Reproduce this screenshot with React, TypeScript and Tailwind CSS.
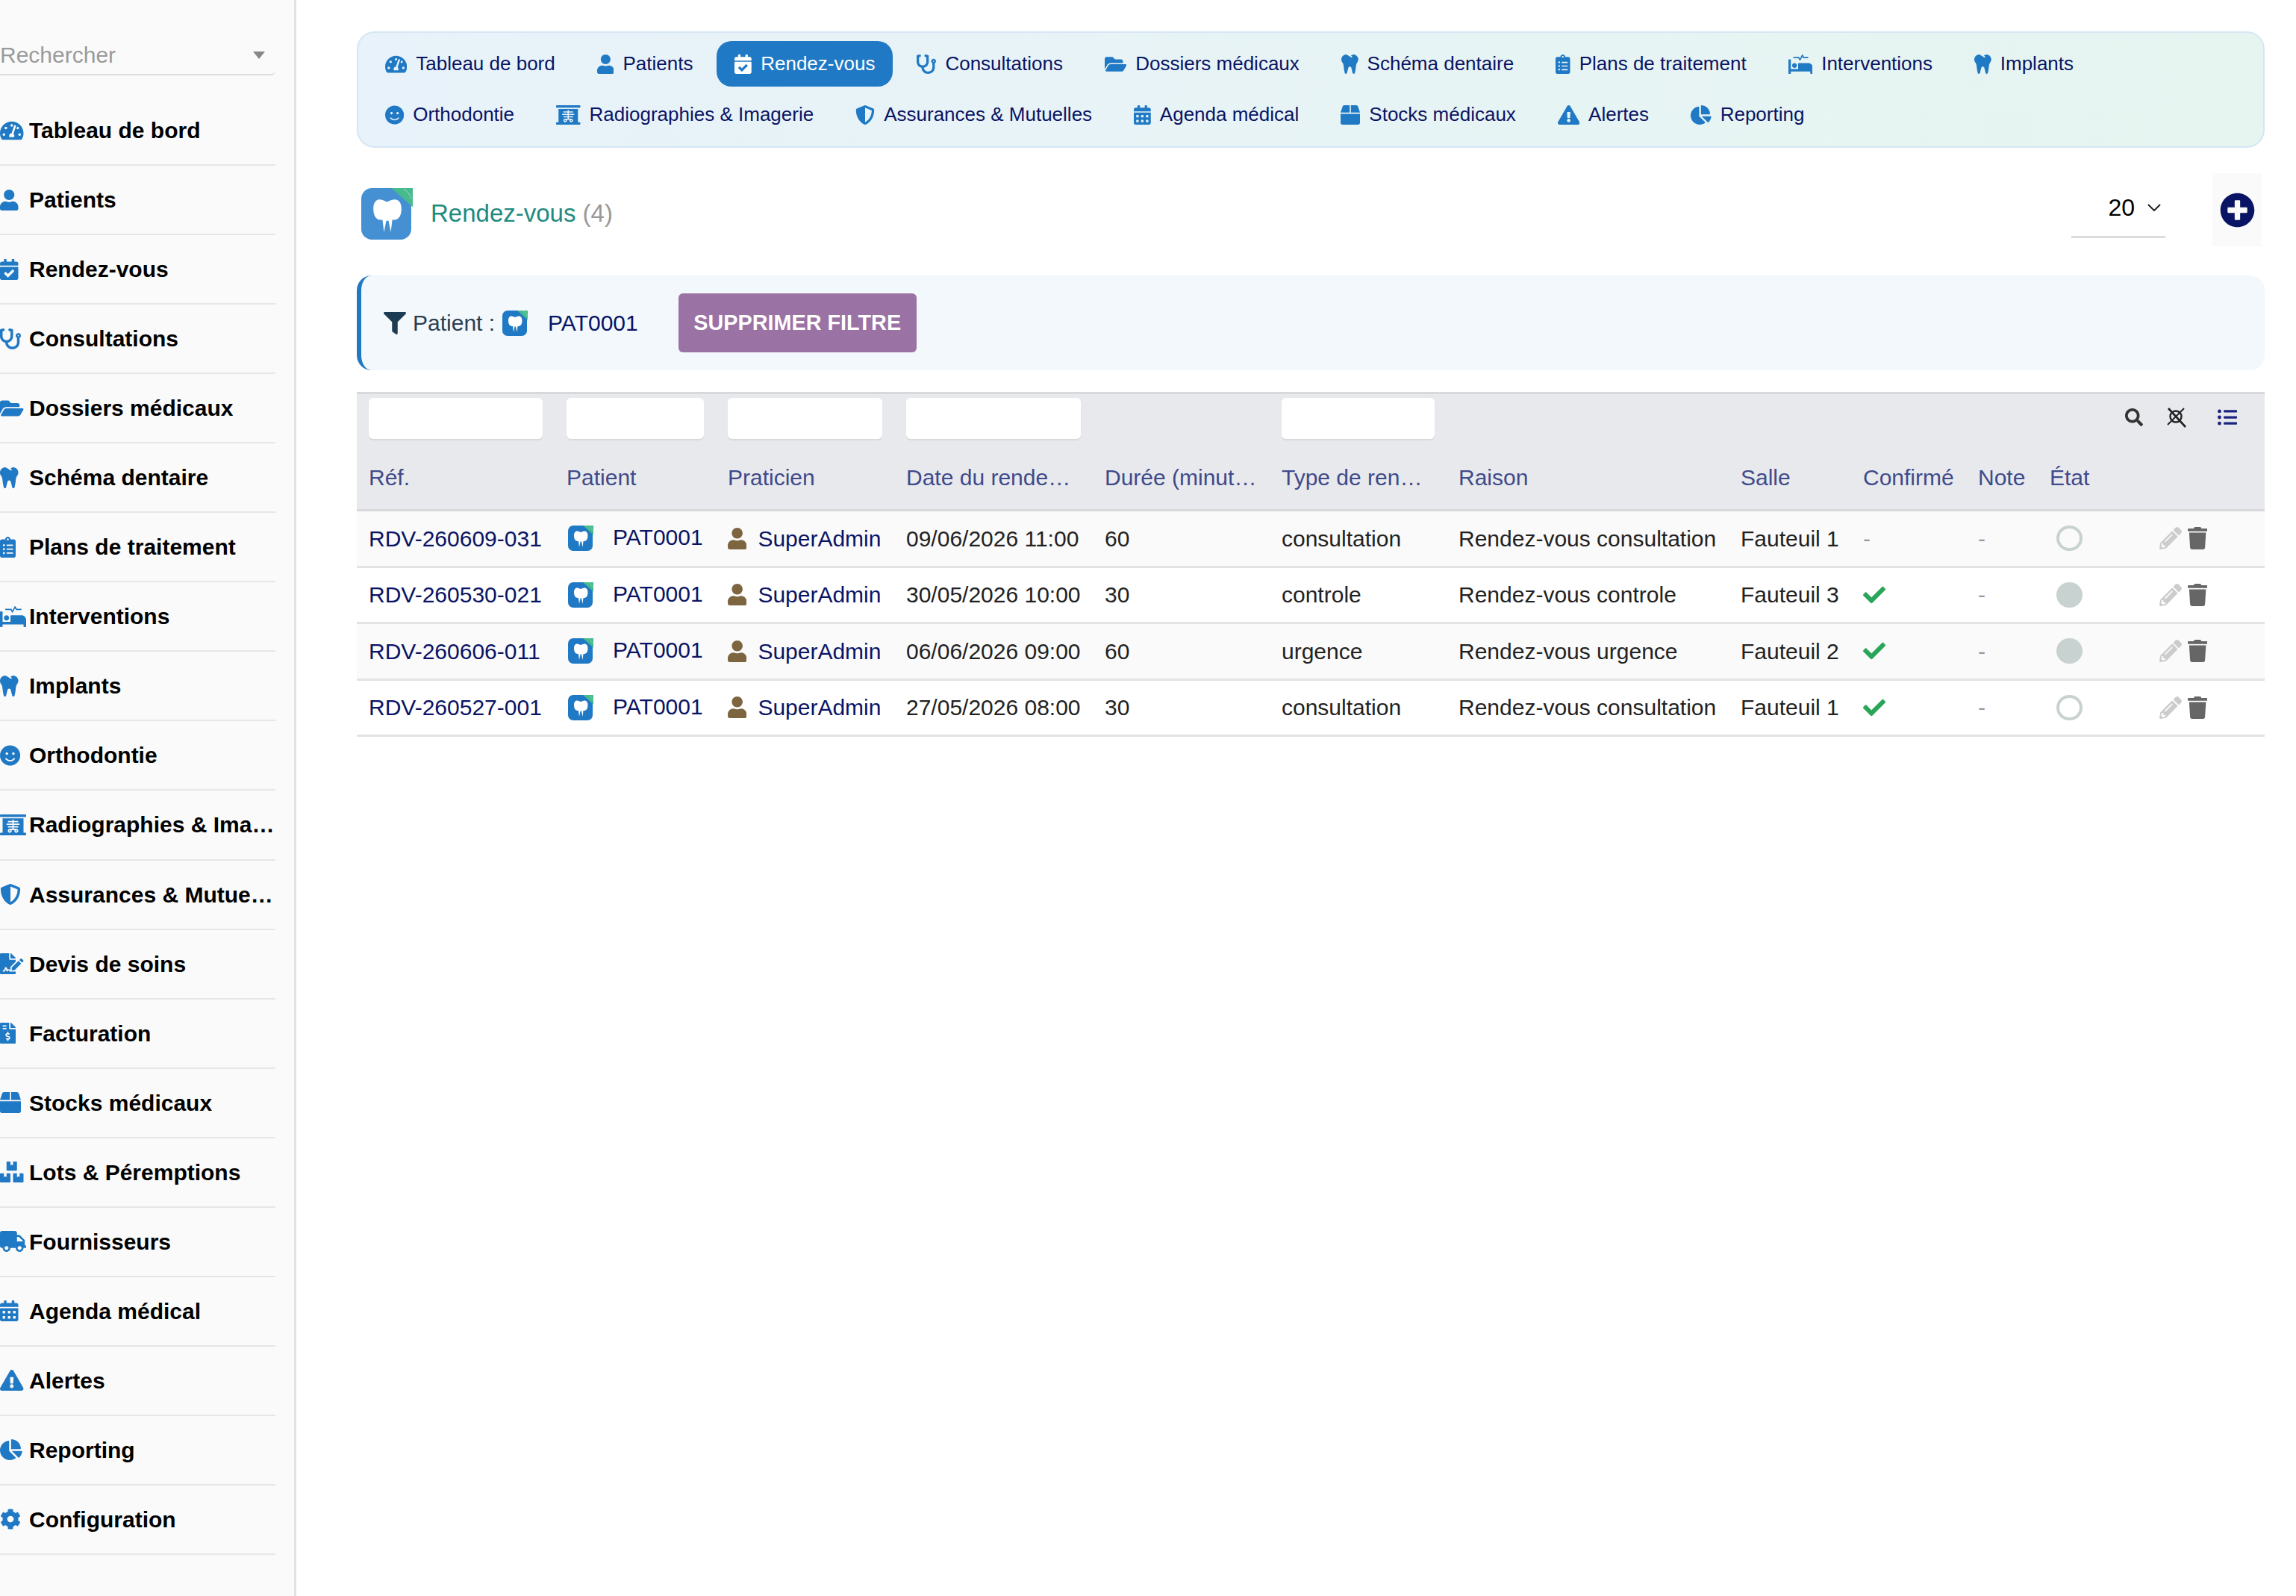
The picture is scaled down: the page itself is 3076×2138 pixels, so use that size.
import React from "react";
import {
  FaTachometerAlt, FaUser, FaCalendarCheck, FaStethoscope, FaFolderOpen, FaTooth, FaClipboardList,
  FaProcedures, FaSmile, FaXRay, FaShieldAlt, FaFileSignature, FaFileInvoiceDollar, FaBox, FaBoxes,
  FaTruck, FaCalendarAlt, FaExclamationTriangle, FaChartPie, FaCog, FaFilter, FaPlusCircle, FaSearch,
  FaListUl, FaCheck, FaPencilAlt, FaTrash,
} from "react-icons/fa";

type Ic = React.ComponentType<{ className?: string }>;
type Entry = [Ic, string, string];

const dash: Entry = [FaTachometerAlt, "Tableau de bord", "aspect-[576/512]"];
const pat: Entry = [FaUser, "Patients", "aspect-[448/512]"];
const rdv: Entry = [FaCalendarCheck, "Rendez-vous", "aspect-[448/512]"];
const cons: Entry = [FaStethoscope, "Consultations", "aspect-square"];
const doss: Entry = [FaFolderOpen, "Dossiers médicaux", "aspect-[576/512]"];
const schema: Entry = [FaTooth, "Schéma dentaire", "aspect-[448/512]"];
const plans: Entry = [FaClipboardList, "Plans de traitement", "aspect-[384/512]"];
const interv: Entry = [FaProcedures, "Interventions", "aspect-[640/512]"];
const impl: Entry = [FaTooth, "Implants", "aspect-[448/512]"];
const ortho: Entry = [FaSmile, "Orthodontie", "aspect-[496/512]"];
const radio: Entry = [FaXRay, "Radiographies & Imagerie", "aspect-[640/512]"];
const assur: Entry = [FaShieldAlt, "Assurances & Mutuelles", "aspect-square"];
const devis: Entry = [FaFileSignature, "Devis de soins", "aspect-[576/512]"];
const fact: Entry = [FaFileInvoiceDollar, "Facturation", "aspect-[384/512]"];
const stock: Entry = [FaBox, "Stocks médicaux", "aspect-square"];
const lots: Entry = [FaBoxes, "Lots & Péremptions", "aspect-[576/512]"];
const four: Entry = [FaTruck, "Fournisseurs", "aspect-[640/512]"];
const agenda: Entry = [FaCalendarAlt, "Agenda médical", "aspect-[448/512]"];
const alert: Entry = [FaExclamationTriangle, "Alertes", "aspect-[576/512]"];
const rep: Entry = [FaChartPie, "Reporting", "aspect-[544/512]"];
const conf: Entry = [FaCog, "Configuration", "aspect-square"];

const side: Entry[] = [dash, pat, rdv, cons, doss, schema, plans, interv, impl, ortho, radio, assur, devis, fact, stock, lots, four, agenda, alert, rep, conf];
const nav1: Entry[] = [dash, pat, rdv, cons, doss, schema, plans, interv, impl];
const nav2: Entry[] = [ortho, radio, assur, agenda, stock, alert, rep];

const rows = [
  { ref: "RDV-260609-031", date: "09/06/2026 11:00", dur: "60", type: "consultation", raison: "Rendez-vous consultation", salle: "Fauteuil 1", ok: false, full: false },
  { ref: "RDV-260530-021", date: "30/05/2026 10:00", dur: "30", type: "controle", raison: "Rendez-vous controle", salle: "Fauteuil 3", ok: true, full: true },
  { ref: "RDV-260606-011", date: "06/06/2026 09:00", dur: "60", type: "urgence", raison: "Rendez-vous urgence", salle: "Fauteuil 2", ok: true, full: true },
  { ref: "RDV-260527-001", date: "27/05/2026 08:00", dur: "30", type: "consultation", raison: "Rendez-vous consultation", salle: "Fauteuil 1", ok: true, full: false },
];

function Logo({ small }: { small?: boolean }) {
  return (
    <svg viewBox="0 0 68 68" className={small ? "w-[34px] h-[34px] shrink-0" : "w-[69px] h-[69px] shrink-0"}>
      <rect x="0" y="0" width="66" height="68" rx="14" className={small ? "fill-[#2079c4]" : "fill-[#4590d3]"} />
      <path d="M40 0H68V25Z" className="fill-[#48bb8e]" />
      <path d="M56 1Q64 6 66 14" fill="none" stroke="#fff" strokeOpacity="0.6" strokeWidth="0.7" />
      <path d="M24 15C29 15 32 18 34 18C36 18 39 15 44 15C50 15 53 20 53 27C53 36 50 41 44 42L41 42L39 58L36 43L33 43L30 58L28 42L25 42C19 41 16 36 16 27C16 20 19 15 24 15Z" fill="#fff" />
    </svg>
  );
}

function NavItem({ e, active }: { e: Entry; active?: boolean }) {
  const [I, t, a] = e;
  return (
    <div className={active ? "flex h-[61px] items-center gap-[12px] rounded-[20px] bg-[#2079c4] px-[24px] text-white" : "flex h-[61px] items-center gap-[12px] px-[24px] text-[#0a1464]"}>
      <I className={`h-[26px] w-auto shrink-0 ${a} ${active ? "text-white" : "text-[#2079c4]"}`} />
      <span className="whitespace-nowrap">{t}</span>
    </div>
  );
}

function ResetIcon() {
  return (
    <svg viewBox="0 0 28 27" className="w-[28px] h-[27px]" fill="none" stroke="#222">
      <circle cx="13" cy="12" r="7.5" strokeWidth="2.4" />
      <path d="M3 1L26 26" strokeWidth="2.6" />
      <path d="M24 1L2 23" strokeWidth="2" />
    </svg>
  );
}

const th = "px-[16px] h-[89px] border-b-[3px] border-[#d9d9dc] text-left font-normal text-[#3f4a8a] truncate";
const td = "px-[16px] h-[75.5px] border-b-[3px] border-[#e3e3e3] text-[#222] whitespace-nowrap overflow-hidden";

function FilterInput() {
  return <div className="h-[55px] w-full rounded-[6px] bg-white shadow-[0_2px_1px_#d9d9dc]" />;
}

export default function App() {
  return (
    <div className="flex h-[2138px] w-[3076px] overflow-hidden bg-white font-['Liberation_Sans',Arial,sans-serif]">
      <aside className="h-full w-[397px] shrink-0 border-r-[3px] border-[#e2e2e2] bg-[#fafafa] pr-[25px]">
        <div className="mb-[28px] mt-[50px] flex h-[51px] items-center justify-between rounded-br-[6px] border-b-2 border-[#dcdcdc] pb-[2px] pr-[14px] text-[30px] text-[#9a9a9a]">
          <span>Rechercher</span>
          <span className="h-0 w-0 border-x-[8px] border-t-[10px] border-x-transparent border-t-[#888]" />
        </div>
        {side.map(([I, t, a], i) => (
          <div key={i} className="flex h-[93.05px] items-center border-b-2 border-[#e6e6e6] text-[30px] font-bold text-black">
            <span className="w-[39px] shrink-0">
              <I className={`h-[28px] w-auto ${a} text-[#2079c4]`} />
            </span>
            <span className="truncate">{t}</span>
          </div>
        ))}
      </aside>

      <main className="min-w-0 flex-1 pl-[81px] pr-[42px] pt-[42px]">
        <nav className="flex h-[156px] flex-col gap-[7px] rounded-[24px] border-2 border-[#d5e6f3] bg-gradient-to-r from-[#e8f2fa] to-[#e6f5f0] px-[12px] pt-[11px] text-[26px]">
          <div className="flex gap-[8px]">
            {nav1.map((e, i) => <NavItem key={i} e={e} active={i === 2} />)}
          </div>
          <div className="flex gap-[8px]">
            {nav2.map((e, i) => <NavItem key={i} e={e} />)}
          </div>
        </nav>

        <header className="mt-[34px] flex h-[98px] items-center pl-[6px] pr-[4px]">
          <div className="flex items-center gap-[24px] pt-[10px]">
            <Logo />
            <span className="text-[33px] text-[#1f8a80]">
              Rendez-vous <span className="text-[#999]">(4)</span>
            </span>
          </div>
          <div className="ml-auto flex h-full items-center">
            <div className="mb-[2px] mt-[12px] flex h-[65px] w-[126px] items-center justify-end gap-[17px] border-b-[3px] border-[#dcdcdc] pb-[14px] pr-[6px] text-[32px] text-black">
              <span>20</span>
              <svg viewBox="0 0 18 10" className="h-[10px] w-[18px]" fill="none" stroke="#222" strokeWidth="2"><path d="M1 1L9 9L17 1" /></svg>
            </div>
            <div className="ml-[63px] flex h-full w-[66px] items-center justify-center bg-[#fafafa]">
              <FaPlusCircle className="h-[47px] w-[47px] text-[#0a1464]" />
            </div>
          </div>
        </header>

        <section className="mt-[39px] flex h-[127px] items-center rounded-[20px] border-l-[6px] border-[#2079c4] bg-[#f2f8fc] pl-[30px] text-[30px]">
          <FaFilter className="h-[30px] w-[30px] text-[#1d3b53]" />
          <span className="ml-[9px] whitespace-pre text-[#2c3e50]">Patient :</span>
          <span className="ml-[10px]"><Logo small /></span>
          <span className="ml-[27px] text-[#0a1464]">PAT0001</span>
          <button className="ml-[54px] flex h-[79px] w-[319px] items-center justify-center rounded-[6px] bg-[#9b72a4] text-[28.8px] font-bold text-white">
            SUPPRIMER FILTRE
          </button>
        </section>

        <table className="mt-[29px] w-full table-fixed border-separate border-spacing-0 text-[30px]">
          <colgroup>
            <col className="w-[265px]" /><col className="w-[216px]" /><col className="w-[239px]" /><col className="w-[266px]" />
            <col className="w-[237px]" /><col className="w-[237px]" /><col className="w-[378px]" /><col className="w-[164px]" />
            <col className="w-[154px]" /><col className="w-[96px]" /><col className="w-[147px]" /><col className="w-[157px]" />
          </colgroup>
          <thead className="bg-[#e8e9ed]">
            <tr>
              {[0, 1, 2, 3, 4, 5, 6, 7, 8, 9].map((c) => (
                <td key={c} className="h-[71px] border-t-[3px] border-[#d9d9dc] px-[16px] pt-[5px] align-top">
                  {[0, 1, 2, 3, 5].includes(c) ? <FilterInput /> : null}
                </td>
              ))}
              <td colSpan={2} className="h-[71px] border-t-[3px] border-[#d9d9dc] pb-[6px] pr-[37px]">
                <div className="flex items-center justify-end gap-[31px]">
                  <FaSearch className="h-[24px] w-[24px] text-[#333]" />
                  <ResetIcon />
                  <FaListUl className="ml-[10px] h-[26px] w-[26px] text-[#1a237e]" />
                </div>
              </td>
            </tr>
            <tr>
              {["Réf.", "Patient", "Praticien", "Date du rendez-vous", "Durée (minutes)", "Type de rendez-vous", "Raison", "Salle", "Confirmé", "Note", "État", ""].map((h, i) => (
                <th key={i} className={th}>{h}</th>
              ))}
            </tr>
          </thead>
          <tbody>
            {rows.map((r, i) => (
              <tr key={r.ref} className={i % 2 === 0 ? "bg-[#fafafa]" : "bg-white"}>
                <td className={td}><span className="text-[#0a1464]">{r.ref}</span></td>
                <td className={td}>
                  <div className="flex items-center">
                    <span className="ml-[2px]"><Logo small /></span>
                    <span className="mb-[3px] ml-[26px] text-[#0a1464]">PAT0001</span>
                  </div>
                </td>
                <td className={td}>
                  <div className="flex items-center gap-[15px]">
                    <FaUser className="h-[29px] w-auto aspect-[448/512] text-[#7d6540]" />
                    <span className="text-[#0a1464]">SuperAdmin</span>
                  </div>
                </td>
                <td className={td}>{r.date}</td>
                <td className={td}>{r.dur}</td>
                <td className={td}>{r.type}</td>
                <td className={td}>{r.raison}</td>
                <td className={td}>{r.salle}</td>
                <td className={td}>
                  {r.ok ? <FaCheck className="h-[30px] w-[30px] text-[#2ba55a]" /> : <span className="text-[#999]">-</span>}
                </td>
                <td className={td}><span className="text-[#999]">-</span></td>
                <td className={td}>
                  <div className={r.full ? "ml-[9px] h-[34px] w-[35px] rounded-full bg-[#c8d2d0]" : "ml-[9px] h-[34px] w-[35px] rounded-full border-[4px] border-[#c8d2d0]"} />
                </td>
                <td className={td}>
                  <div className="flex items-center gap-[8px]">
                    <FaPencilAlt className="h-[30px] w-[30px] text-[#cccccc]" />
                    <FaTrash className="h-[30px] w-auto aspect-[448/512] text-[#666]" />
                  </div>
                </td>
              </tr>
            ))}
          </tbody>
        </table>
      </main>
    </div>
  );
}
